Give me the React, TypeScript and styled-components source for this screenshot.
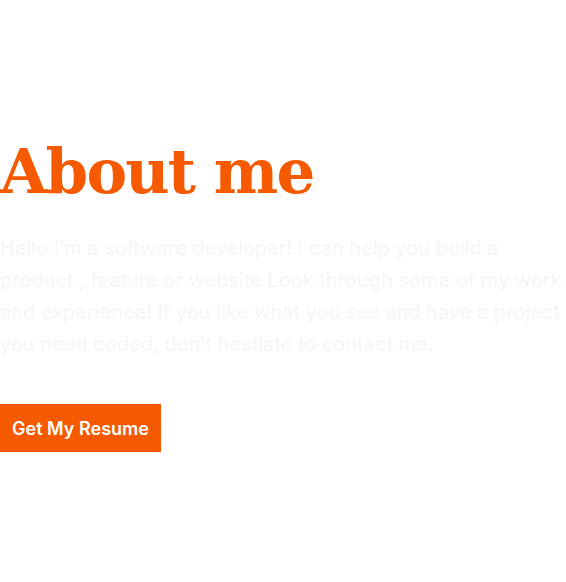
import React from 'react';
import styled, { createGlobalStyle } from 'styled-components';

const GlobalStyle = createGlobalStyle`
  html, body {
    margin: 0;
    padding: 0;
    background: #ffffff;
  }
`;

const About: React.FunctionComponent = () => (
  <>
    <GlobalStyle />
    <Section>
      <Title>About me</Title>
      <Text>
        Hello I’m a software developer! I can help you build a product , feature or website Look
        through some of my work and experience! If you like what you see and have a project you
        need coded, don’t hestiate to contact me.
      </Text>
      <ResumeButton>Get My Resume</ResumeButton>
    </Section>
  </>
);

const Section = styled.section`
  width: 566px;
  height: 582px;
  box-sizing: border-box;
  padding-top: 127px;
  display: flex;
  flex-direction: column;
  align-items: flex-start;
`;

const Title = styled.h1`
  margin: 0;
  color: #f55a00;
  font-family: 'DejaVu Serif', 'Liberation Serif', serif;
  font-size: 61px;
  font-weight: 700;
  line-height: 90px;
  letter-spacing: -1.8px;
`;

const Text = styled.p`
  margin: 15px 0 0;
  width: 566px;
  color: #f5f5f5;
  font-family: Inter, 'Liberation Sans', sans-serif;
  font-size: 20px;
  font-weight: 400;
  line-height: 32px;
`;

const ResumeButton = styled.button`
  margin-top: 44px;
  width: 161px;
  height: 48px;
  padding: 0;
  border: none;
  background: #f55a00;
  color: #ffffff;
  font-family: Inter, 'Liberation Sans', sans-serif;
  font-size: 18px;
  font-weight: 600;
  cursor: pointer;
`;

export default About;
